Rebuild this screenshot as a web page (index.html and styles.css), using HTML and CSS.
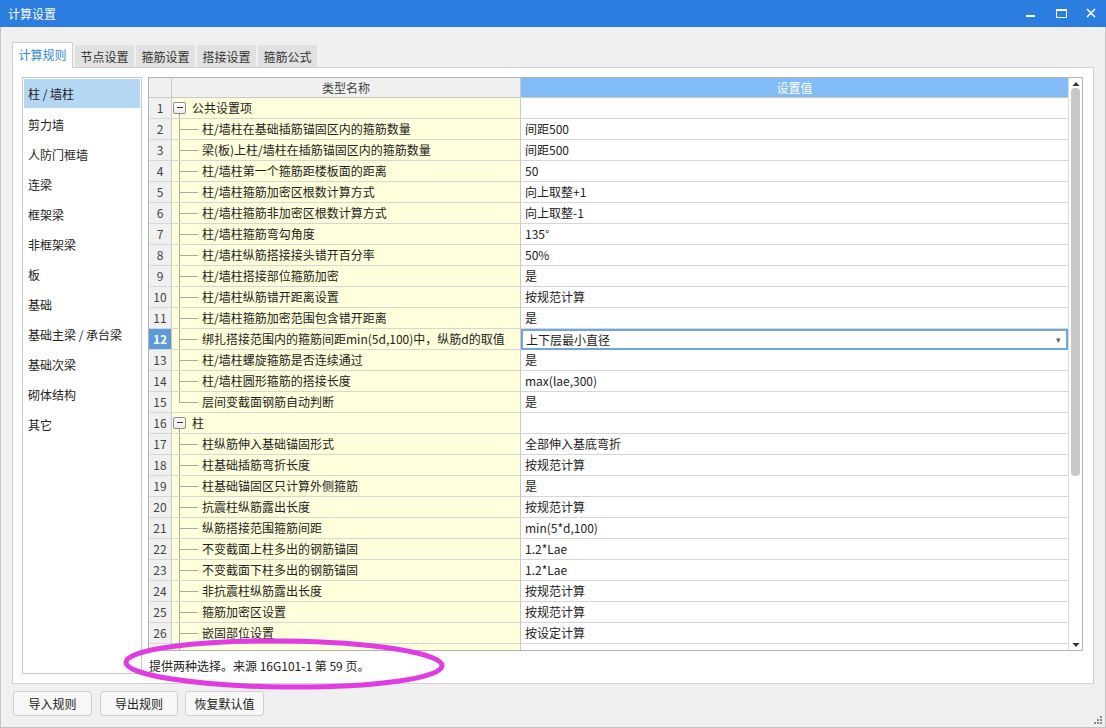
FILE: index.html
```html
<!DOCTYPE html>
<html lang="zh">
<head>
<meta charset="utf-8">
<title>计算设置</title>
<link rel="stylesheet" href="styles.css">
</head>
<body>
<div class="window">
  <div class="titlebar">
    <span class="title">计算设置</span>
    <div class="controls">
      <svg class="ctl" width="30" height="27" viewBox="0 0 30 27"><rect x="10" y="15" width="9" height="2" fill="#fff"/></svg>
      <svg class="ctl" width="30" height="27" viewBox="0 0 30 27"><rect x="10.5" y="9.5" width="10" height="8" fill="none" stroke="#fff" stroke-width="1"/><rect x="10" y="9" width="11" height="2" fill="#fff"/></svg>
      <svg class="ctl" width="30" height="27" viewBox="0 0 30 27"><path d="M11 9 L19 17 M19 9 L11 17" stroke="#fff" stroke-width="1.6" fill="none"/></svg>
    </div>
  </div>
  <div class="body">
    <div class="tabs">
      <div class="tab active">计算规则</div>
      <div class="tab">节点设置</div>
      <div class="tab">箍筋设置</div>
      <div class="tab">搭接设置</div>
      <div class="tab">箍筋公式</div>
    </div>
    <div class="panel">
      <ul class="cats">
        <li class="cat selected">柱 / 墙柱</li>
        <li class="cat">剪力墙</li>
        <li class="cat">人防门框墙</li>
        <li class="cat">连梁</li>
        <li class="cat">框架梁</li>
        <li class="cat">非框架梁</li>
        <li class="cat">板</li>
        <li class="cat">基础</li>
        <li class="cat">基础主梁 / 承台梁</li>
        <li class="cat">基础次梁</li>
        <li class="cat">砌体结构</li>
        <li class="cat">其它</li>
      </ul>
      <div class="right">
        <div class="grid">
          <div class="table">
            <div class="row head">
              <div class="hc hnum"></div>
              <div class="hc hname">类型名称</div>
              <div class="hc hval">设置值</div>
            </div>
            <div class="rows">
              <div class="row"><div class="c num">1</div><div class="c name"><span class="tog"><span class="box"></span></span><span class="gtext">公共设置项</span></div><div class="c val"></div></div>
              <div class="row"><div class="c num">2</div><div class="c name"><span class="br"></span>柱/墙柱在基础插筋锚固区内的箍筋数量</div><div class="c val">间距500</div></div>
              <div class="row"><div class="c num">3</div><div class="c name"><span class="br"></span>梁(板)上柱/墙柱在插筋锚固区内的箍筋数量</div><div class="c val">间距500</div></div>
              <div class="row"><div class="c num">4</div><div class="c name"><span class="br"></span>柱/墙柱第一个箍筋距楼板面的距离</div><div class="c val">50</div></div>
              <div class="row"><div class="c num">5</div><div class="c name"><span class="br"></span>柱/墙柱箍筋加密区根数计算方式</div><div class="c val">向上取整+1</div></div>
              <div class="row"><div class="c num">6</div><div class="c name"><span class="br"></span>柱/墙柱箍筋非加密区根数计算方式</div><div class="c val">向上取整-1</div></div>
              <div class="row"><div class="c num">7</div><div class="c name"><span class="br"></span>柱/墙柱箍筋弯勾角度</div><div class="c val">135°</div></div>
              <div class="row"><div class="c num">8</div><div class="c name"><span class="br"></span>柱/墙柱纵筋搭接接头错开百分率</div><div class="c val">50%</div></div>
              <div class="row"><div class="c num">9</div><div class="c name"><span class="br"></span>柱/墙柱搭接部位箍筋加密</div><div class="c val">是</div></div>
              <div class="row"><div class="c num">10</div><div class="c name"><span class="br"></span>柱/墙柱纵筋错开距离设置</div><div class="c val">按规范计算</div></div>
              <div class="row"><div class="c num">11</div><div class="c name"><span class="br"></span>柱/墙柱箍筋加密范围包含错开距离</div><div class="c val">是</div></div>
              <div class="row sel"><div class="c num">12</div><div class="c name"><span class="br"></span>绑扎搭接范围内的箍筋间距min(5d,100)中，纵筋d的取值</div><div class="c val edit"><span>上下层最小直径</span><span class="dd">▾</span></div></div>
              <div class="row"><div class="c num">13</div><div class="c name"><span class="br"></span>柱/墙柱螺旋箍筋是否连续通过</div><div class="c val">是</div></div>
              <div class="row"><div class="c num">14</div><div class="c name"><span class="br"></span>柱/墙柱圆形箍筋的搭接长度</div><div class="c val">max(lae,300)</div></div>
              <div class="row"><div class="c num">15</div><div class="c name"><span class="br last"></span>层间变截面钢筋自动判断</div><div class="c val">是</div></div>
              <div class="row"><div class="c num">16</div><div class="c name"><span class="tog"><span class="box"></span></span><span class="gtext">柱</span></div><div class="c val"></div></div>
              <div class="row"><div class="c num">17</div><div class="c name"><span class="br"></span>柱纵筋伸入基础锚固形式</div><div class="c val">全部伸入基底弯折</div></div>
              <div class="row"><div class="c num">18</div><div class="c name"><span class="br"></span>柱基础插筋弯折长度</div><div class="c val">按规范计算</div></div>
              <div class="row"><div class="c num">19</div><div class="c name"><span class="br"></span>柱基础锚固区只计算外侧箍筋</div><div class="c val">是</div></div>
              <div class="row"><div class="c num">20</div><div class="c name"><span class="br"></span>抗震柱纵筋露出长度</div><div class="c val">按规范计算</div></div>
              <div class="row"><div class="c num">21</div><div class="c name"><span class="br"></span>纵筋搭接范围箍筋间距</div><div class="c val">min(5*d,100)</div></div>
              <div class="row"><div class="c num">22</div><div class="c name"><span class="br"></span>不变截面上柱多出的钢筋锚固</div><div class="c val">1.2*Lae</div></div>
              <div class="row"><div class="c num">23</div><div class="c name"><span class="br"></span>不变截面下柱多出的钢筋锚固</div><div class="c val">1.2*Lae</div></div>
              <div class="row"><div class="c num">24</div><div class="c name"><span class="br"></span>非抗震柱纵筋露出长度</div><div class="c val">按规范计算</div></div>
              <div class="row"><div class="c num">25</div><div class="c name"><span class="br"></span>箍筋加密区设置</div><div class="c val">按规范计算</div></div>
              <div class="row"><div class="c num">26</div><div class="c name"><span class="br"></span>嵌固部位设置</div><div class="c val">按设定计算</div></div>
              <div class="row"><div class="c num"></div><div class="c name"><span class="br"></span></div><div class="c val"></div></div>
            </div>
          </div>
          <div class="vscroll">
            <svg class="arrow" width="14" height="9" viewBox="0 0 14 9"><path d="M3.5 7 L7 3 L10.5 7 Z" fill="#333"/></svg>
            <div class="track"><div class="thumb"></div></div>
            <svg class="arrow" width="14" height="9" viewBox="0 0 14 9"><path d="M3.5 2 L7 6 L10.5 2 Z" fill="#333"/></svg>
          </div>
        </div>
        <div class="desc">提供两种选择。来源 16G101-1 第 59 页。</div>
      </div>
    </div>
    <div class="buttons">
      <button class="btn b1">导入规则</button>
      <button class="btn b2">导出规则</button>
      <button class="btn b3">恢复默认值</button>
    </div>
  </div>
  <svg class="grip" width="10" height="10" viewBox="0 0 10 10">
    <rect x="7" y="1" width="2" height="2" fill="#888"/>
    <rect x="4" y="4" width="2" height="2" fill="#888"/><rect x="7" y="4" width="2" height="2" fill="#888"/>
    <rect x="1" y="7" width="2" height="2" fill="#888"/><rect x="4" y="7" width="2" height="2" fill="#888"/><rect x="7" y="7" width="2" height="2" fill="#888"/>
  </svg>
  <svg class="annot" width="340" height="60" viewBox="0 0 340 60">
    <ellipse cx="162" cy="29" rx="158" ry="23" fill="none" stroke="#e23be2" stroke-width="5" transform="rotate(0.6 162 29)"/>
  </svg>
</div>
</body>
</html>
```

FILE: styles.css
```css
* { box-sizing: border-box; }
html, body { margin: 0; padding: 0; }
body {
  width: 1106px;
  height: 728px;
  overflow: hidden;
  font-family: "Noto Sans CJK SC", "Microsoft YaHei", sans-serif;
  font-size: 12px;
  color: #222;
  background: #f0f0f0;
}
.window {
  position: relative;
  width: 1106px;
  height: 728px;
  border-left: 1px solid #c4c4c4;
  border-right: 1px solid #c4c4c4;
  border-bottom: 1px solid #c4c4c4;
  background: #f0f0f0;
}
.titlebar {
  height: 27px;
  margin: 0 -1px;
  background: #2b7de0;
  color: #fff;
  display: flex;
  align-items: center;
  justify-content: space-between;
  padding-left: 8px;
}
.title { font-size: 12px; line-height: 27px; }
.controls { display: flex; }
.ctl { display: block; }
.body { padding: 15px 11px 0 11px; }
.tabs {
  display: flex;
  align-items: flex-end;
  height: 25px;
  gap: 2px;
}
.tab {
  height: 22px;
  width: 59px;
  background: #e1e1e1;
  color: #333;
  text-align: center;
  line-height: 22px;
  border: 1px solid #e1e1e1;
  border-bottom: none;
}
.tab.active {
  height: 26px;
  width: 61px;
  margin-bottom: -1px;
  background: #fff;
  color: #2d86dc;
  border: 1px solid #d0d0d0;
  border-bottom: none;
  line-height: 24px;
  position: relative;
  z-index: 1;
}
.panel {
  height: 617px;
  border: 1px solid #d0d0d0;
  background: #fff;
  display: flex;
  align-items: flex-start;
  gap: 6px;
  padding: 9px 10px 0 9px;
}
.cats {
  list-style: none;
  margin: 0;
  padding: 1px 1px 0 1px;
  width: 120px;
  height: 597px;
  border: 1px solid #c8c8c8;
  background: #fff;
}
.cat {
  height: 30px;
  line-height: 31px;
  padding-left: 4px;
  color: #222;
}
.cat.selected { background: #b4d8f4; height: 29px; line-height: 29px; margin-bottom: 1px; }
.right {
  flex: 1;
  display: flex;
  flex-direction: column;
}
.grid {
  height: 574px;
  border: 1px solid #b2b2b2;
  display: flex;
  overflow: hidden;
}
.table { flex: 1; overflow: hidden; }
.row {
  display: grid;
  grid-template-columns: 23px 349px 1fr;
  height: 21px;
}
.head { height: 20px; }
.hc {
  line-height: 19px;
  border-bottom: 1px solid #c9c9c9;
  border-right: 1px solid #c9c9c9;
  text-align: center;
  white-space: nowrap;
}
.hnum { background: #f0f0f0; }
.hname { background: #f0f0f0; color: #444; }
.hval { background: #81bcf6; color: #fff; border-right: none; }
.c {
  border-right: 1px solid #c9c9c9;
  border-bottom: 1px solid #d6d6d6;
  line-height: 20px;
  white-space: nowrap;
  overflow: hidden;
}
.num {
  background: #f0f0f0;
  color: #444;
  text-align: center;
}
.name {
  background: #ffffdc;
  display: flex;
  align-items: stretch;
}
.val { background: #fff; padding-left: 4px; border-right: none; }
.br {
  flex: none;
  width: 19px;
  margin-left: 7px;
  margin-right: 4px;
  background:
    linear-gradient(#a8a8a8, #a8a8a8) 0 0 / 1px 100% no-repeat,
    linear-gradient(#a8a8a8, #a8a8a8) 0 10px / 100% 1px no-repeat;
}
.br.last {
  background:
    linear-gradient(#a8a8a8, #a8a8a8) 0 0 / 1px 11px no-repeat,
    linear-gradient(#a8a8a8, #a8a8a8) 0 10px / 100% 1px no-repeat;
}
.tog {
  flex: none;
  width: 13px;
  margin-left: 1px;
  display: flex;
  align-items: center;
  justify-content: center;
  background: linear-gradient(#a8a8a8, #a8a8a8) 6px 16px / 1px 5px no-repeat;
}
.box {
  display: block;
  width: 13px;
  height: 12px;
  margin-top: -1px;
  border: 1px solid #8d8d8d;
  border-radius: 2px;
  background:
    linear-gradient(#333, #333) center / 6px 1px no-repeat,
    linear-gradient(#fff, #ececec);
}
.gtext { margin-left: 6px; }
.sel .num { background: #5b9bd9; color: #fff; font-weight: bold; }
.edit {
  display: flex;
  justify-content: space-between;
  border: 2px solid #6fa6dd;
  padding-left: 3px;
  line-height: 17px;
}
.dd { color: #666; font-size: 9px; padding-right: 5px; line-height: 17px; }
.vscroll {
  width: 14px;
  flex: none;
  background: #fff;
  border-left: 1px solid #dcdcdc;
  display: flex;
  flex-direction: column;
  align-items: center;
  padding-top: 1px;
}
.arrow { display: block; flex: none; }
.track { flex: 1; width: 100%; display: flex; justify-content: center; }
.thumb {
  width: 9px;
  height: 388px;
  background: #c8c8c8;
  border-radius: 4px;
}
.desc {
  height: 33px;
  padding-top: 6px;
  line-height: 17px;
  padding-left: 1px;
  color: #222;
}
.buttons {
  display: flex;
  margin-top: 7px;
  padding-left: 1px;
}
.btn {
  font-family: inherit;
  font-size: 12px;
  color: #222;
  height: 25px;
  width: 79px;
  padding: 0;
  background: #f7f7f7;
  border: 1px solid #cfcfcf;
  border-radius: 3px;
}
.b2 { width: 78px; margin-left: 8px; }
.b3 { margin-left: 7px; }
.grip { position: absolute; right: 2px; bottom: 2px; }
.annot { position: absolute; left: 121px; top: 635px; pointer-events: none; }
```
